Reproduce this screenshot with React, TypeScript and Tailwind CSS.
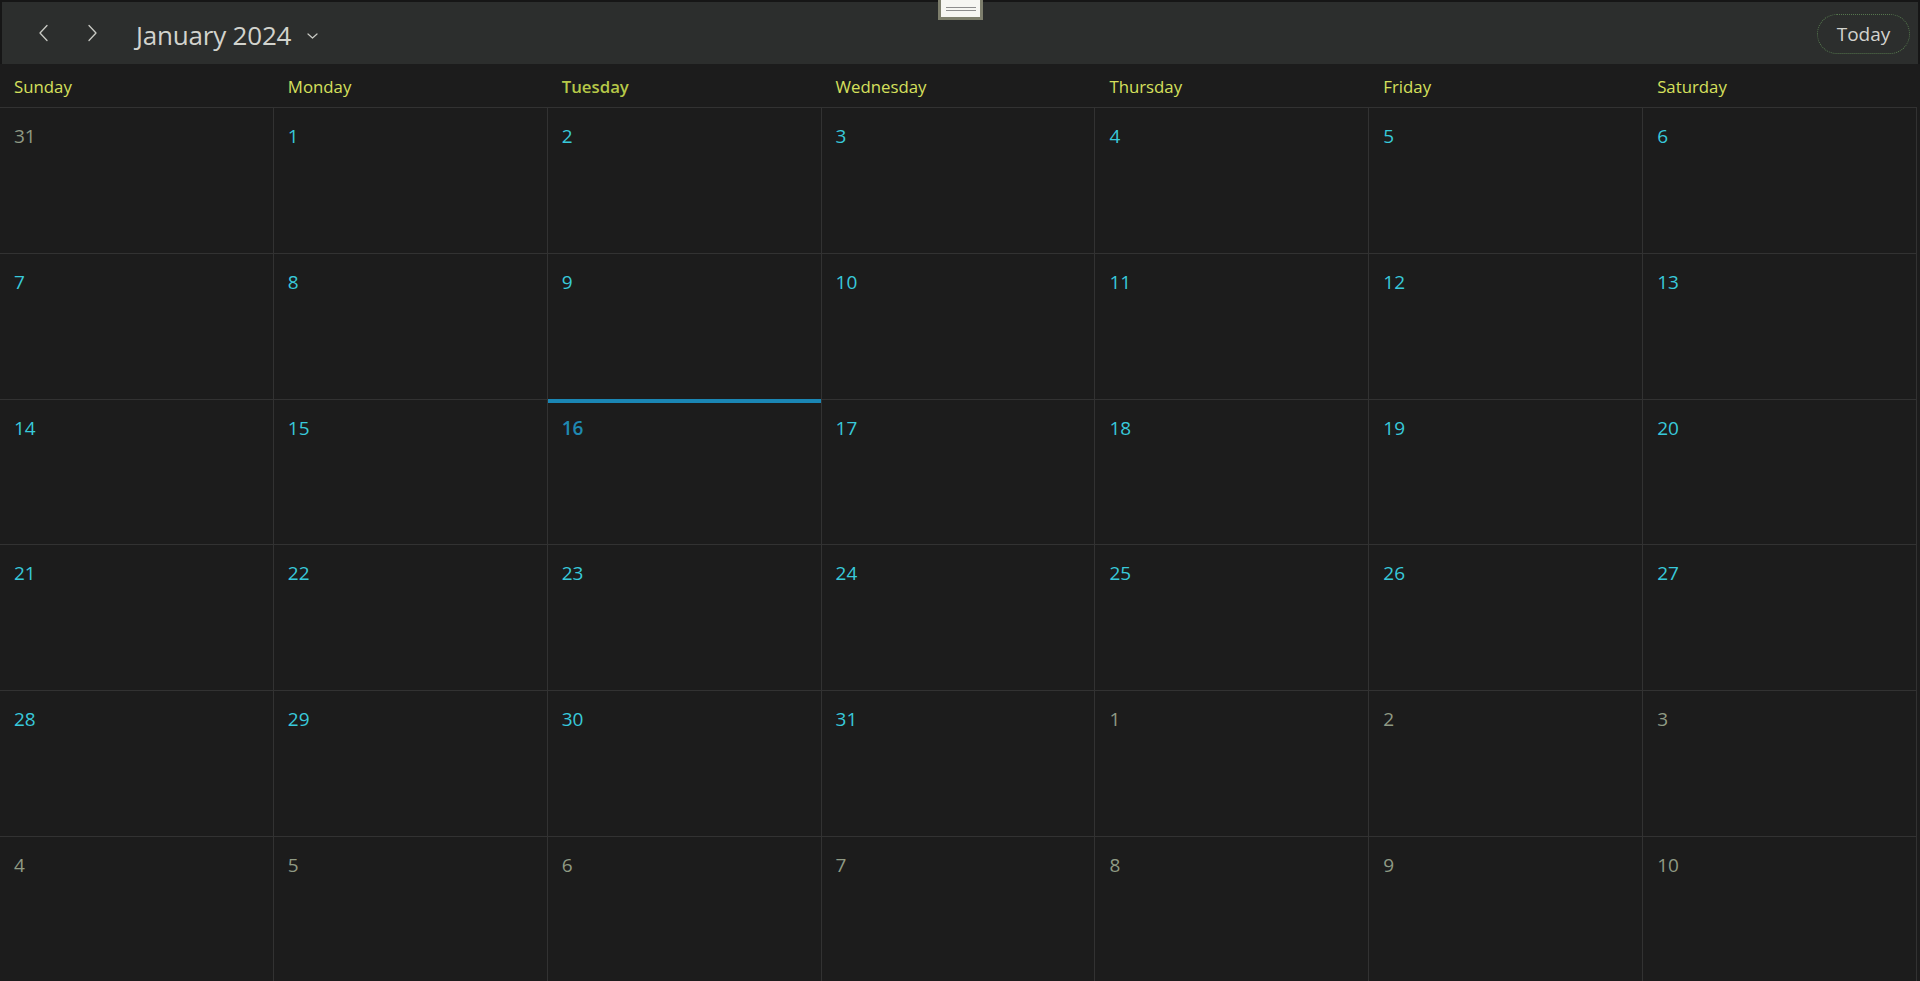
import React from "react";

const days = ["Sunday", "Monday", "Tuesday", "Wednesday", "Thursday", "Friday", "Saturday"];

type Cell = { n: number; inMonth: boolean };

const buildCells = (): Cell[] => {
  const cells: Cell[] = [{ n: 31, inMonth: false }];
  for (let i = 1; i <= 31; i++) cells.push({ n: i, inMonth: true });
  for (let i = 1; i <= 10; i++) cells.push({ n: i, inMonth: false });
  return cells;
};

const Chevron = ({ dir }: { dir: "left" | "right" }) => (
  <svg width="12" height="18" viewBox="0 0 12 18" fill="none">
    <path
      d={dir === "left" ? "M9 1.5 L2 9 L9 16.5" : "M3 1.5 L10 9 L3 16.5"}
      stroke="#c9cac4"
      strokeWidth="1.3"
      strokeLinecap="round"
      strokeLinejoin="round"
    />
  </svg>
);

export default function App() {
  const cells = buildCells();

  return (
    <div className="relative h-[981px] w-[1920px] overflow-hidden bg-[#1c1c1c] font-['Open_Sans',sans-serif]">
      {/* resize grip */}
      <div className="absolute left-[938px] top-0 z-10 flex h-[20px] w-[45px] flex-col items-center justify-center gap-[2px] border-[3px] border-t-0 border-[#7d7e6c] bg-[#f6f6f2]">
        <div className="h-px w-[30px] bg-[#8d8d8d]" />
        <div className="h-px w-[30px] bg-[#8d8d8d]" />
      </div>

      {/* toolbar */}
      <div className="flex h-[64px] items-center border-t-2 border-l-2 border-r-2 border-[#161616] bg-[#2c2e2d] pr-[8px]">
        <button className="ml-[33px] flex h-[30px] w-[18px] items-center justify-center">
          <Chevron dir="left" />
        </button>
        <button className="ml-[30px] flex h-[30px] w-[18px] items-center justify-center">
          <Chevron dir="right" />
        </button>
        <div className="ml-[35px] mt-[4px] flex items-center">
          <span className="text-[26px] leading-none tracking-[-0.2px] text-[#d2d3cd]">January 2024</span>
          <svg className="ml-[16px] mt-[1px]" width="11" height="6" viewBox="0 0 11 6" fill="none">
            <path d="M1 1 L5.5 5 L10 1" stroke="#c9cac4" strokeWidth="1.2" strokeLinecap="round" strokeLinejoin="round" />
          </svg>
        </div>
        <div className="flex-1" />
        <button className="mt-[2px] flex h-[40px] w-[93px] items-center justify-center rounded-full border border-dotted border-[#55774d] text-[19px] text-[#d2d3cd]">
          Today
        </button>
      </div>

      {/* weekday labels */}
      <div className="grid h-[43px] grid-cols-7 pr-[3px]">
        {days.map((d) => (
          <div
            key={d}
            className={
              "flex items-center px-[14px] pt-[2px] text-[16.8px] " +
              (d === "Tuesday" ? "font-semibold text-[#b6c848]" : "text-[#d6e05c]")
            }
          >
            {d}
          </div>
        ))}
      </div>

      {/* month grid */}
      <div className="grid grid-cols-7 grid-rows-[repeat(6,145.8px)] pr-[3px]">
        {cells.map((c, i) => {
          const today = c.inMonth && c.n === 16;
          return (
            <div key={i} className="relative border-t border-r border-[#323232] px-[14px] pt-[14px]">
              {today && <div className="absolute left-0 right-0 -top-px h-[4px] bg-[#1a86b4]" />}
              <span
                className={
                  "text-[19px] " +
                  (today ? "font-semibold text-[#1f88b1]" : c.inMonth ? "text-[#38c9da]" : "text-[#8f9a84]")
                }
              >
                {c.n}
              </span>
            </div>
          );
        })}
      </div>
    </div>
  );
}
